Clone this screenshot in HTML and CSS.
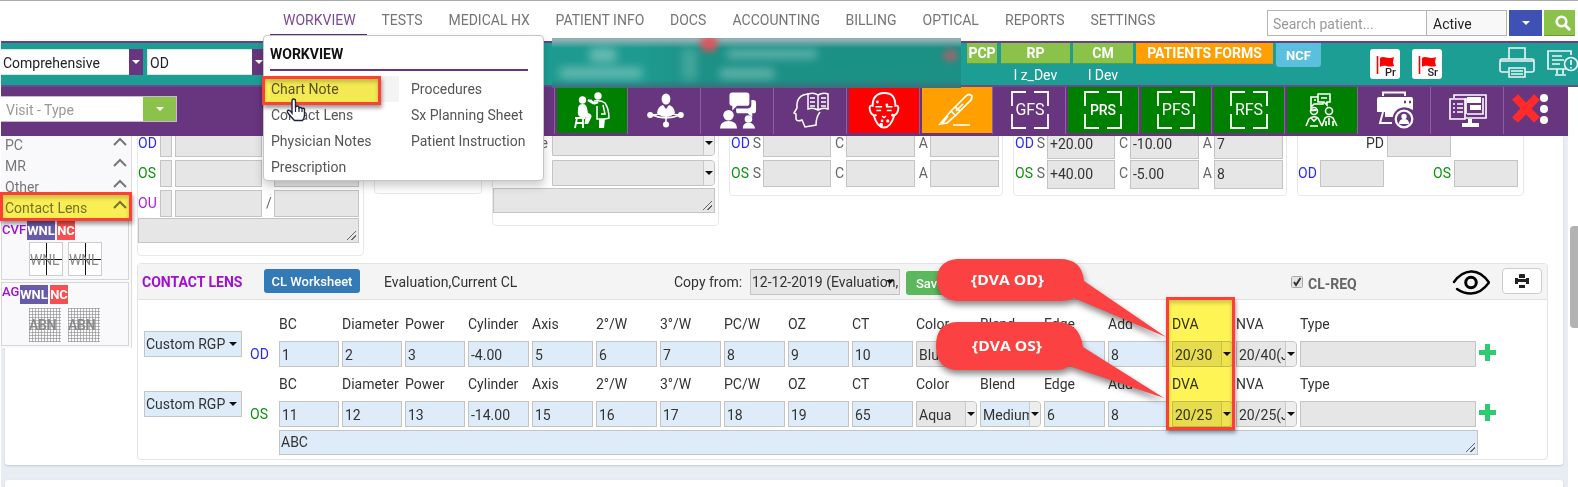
FILE: index.html
```html
<!DOCTYPE html>
<html lang="en">
<head>
<meta charset="utf-8">
<title>Chart Note</title>
<link rel="stylesheet" href="styles.css">
</head>
<body>
<nav class="topnav">
  <div class="menu">
    <a class="active">WORKVIEW</a><a>TESTS</a><a>MEDICAL HX</a><a>PATIENT INFO</a><a>DOCS</a><a>ACCOUNTING</a><a>BILLING</a><a>OPTICAL</a><a>REPORTS</a><a>SETTINGS</a>
  </div>
  <div class="search">
    <div class="search-box">Search patient...</div>
    <div class="search-status">Active</div>
    <div class="search-drop"><i class="caret white"></i></div>
    <div class="search-go"><svg width="16" height="16" viewBox="0 0 16 16"><circle cx="6.5" cy="6.5" r="4.8" fill="none" stroke="#fff" stroke-width="2.6"/><path d="M10 10l4.2 4.2" stroke="#fff" stroke-width="3" stroke-linecap="round"/></svg></div>
  </div>
</nav>

<header class="patient">
  <div class="combo exam"><span>Comprehensive</span><b><i class="caret white"></i></b></div>
  <div class="combo eye"><span>OD</span><b><i class="caret white"></i></b></div>
  <div class="tags">
    <div class="tag pcp"><b>PCP</b></div>
    <div class="tag rp"><b>RP</b><span>l z_Dev</span></div>
    <div class="tag cm"><b>CM</b><span>l Dev</span></div>
    <div class="tag forms"><b>PATIENTS FORMS</b></div>
    <div class="ncf">NCF</div>
  </div>
  <div class="flags">
    <div class="flag"><svg width="20" height="18" viewBox="0 0 20 18"><path d="M1.5 0v18" stroke="#f00" stroke-width="1.6"/><path d="M4 2c4-3 7 2 14-1l-1 5 1 4c-6 2-9-2-14 1z" fill="#f00"/></svg><span>Pr</span></div>
    <div class="flag"><svg width="20" height="18" viewBox="0 0 20 18"><path d="M1.5 0v18" stroke="#f00" stroke-width="1.6"/><path d="M4 2c4-3 7 2 14-1l-1 5 1 4c-6 2-9-2-14 1z" fill="#f00"/></svg><span>Sr</span></div>
  </div>
  <svg class="print-top" width="36" height="32" viewBox="0 0 36 32" fill="none" stroke="#e9f7f5" stroke-width="1.6"><path d="M10 12V1h16v11M9 25H3q-2 0-2-2V14q0-2 2-2h30q2 0 2 2v9q0 2-2 2h-7M1 14h34"/><path d="M10 21h16v9H10zM12 24h12M12 27h12"/></svg>
  <svg class="alert-top" width="31" height="27" viewBox="0 0 31 27" fill="none" stroke="#e9f7f5" stroke-width="1.7"><path d="M24 5V1H1v18h18M5 6h10M5 10h12M5 14h8M10 19v5M16 19v5M8 25h11"/><circle cx="24" cy="14" r="6.5"/><path d="M24 10v5M24 17v1.5"/></svg>
</header>

<div class="toolbar">
  <div class="visit"><span>Visit - Type</span><b><i class="caret white"></i></b></div>
  <div class="tools">
    <div class="tool green"><svg width="36" height="38" viewBox="0 0 36 38" fill="#fff"><circle cx="8.500" cy="9" r="3.700"/><path d="M4 18q0-5 5-5 3 0 4 4l1 5q4 1 3.500 4L14 33h-3.500l1-7H7q-4 0-3-8z"/><path d="M1 27h10M3 27l-2 10M9 27v10M2 32h7" stroke="#fff" stroke-width="1.800" fill="none"/><circle cx="24" cy="5" r="3.700"/><path d="M24 11q-5 3-8-2M14 9l5 3" stroke="#fff" stroke-width="2.600" fill="none"/><path d="M20 10q7-1 11 2 4 6 4 15-3 1-5 1H23V15M29 14l2 9h-4" stroke="#fff" stroke-width="1.500" fill="none"/><path d="M25 28h6l-1 9h-5z"/></svg></div>
    <div class="tool"><svg width="37" height="35" viewBox="0 0 37 35"><path d="M4 22q15-1 15-4 0 3 15 4M5 22q14 6 28 0M19 24v8" stroke="#fff" stroke-width="1.600" fill="none"/><g fill="#fff"><ellipse cx="19" cy="6" rx="4.400" ry="5.500"/><path d="M10 20q1-7 6-8l3 4 3-4q5 1 6 8-4 4-9 4T10 20z"/><circle cx="3.200" cy="22" r="3"/><circle cx="33.800" cy="22" r="3"/><circle cx="19" cy="31.500" r="3"/></g></svg></div>
    <div class="tool"><svg width="38" height="39" viewBox="0 0 40 40" fill="#fff"><path d="M14 1h15q3 0 3 3v8q0 3-3 3H19l-5 5v-5q-3 0-3-3V4q0-3 3-3z"/><path d="M34 9h2q3 0 3 3v8q0 3-3 3h-1v4l-5-4H20q-2 0-2-3v-2h12q4 0 4-4z"/><circle cx="10" cy="25" r="5.500"/><path d="M1 39q0-8 9-8t9 8z"/><circle cx="31" cy="29" r="4"/><path d="M25 39q0-6 6-6t7 6z"/></svg></div>
    <div class="tool"><svg width="38" height="38" viewBox="0 0 38 38" fill="none" stroke="#fff" stroke-width="1.500"><path d="M16 3Q4 4 5 17l-3 5 2 1v5q1 3 6 1l3 7 11-2q0-8 4-13"/><path d="M16 3q6-2 10 1 5-3 10-1v15q-5-2-10 1-5-3-10-1zM26 4v15M18 7h5M18 11h5M18 15h5M29 7h5M29 11h5M29 15h5"/></svg></div>
    <div class="tool red"><svg width="36" height="39" viewBox="0 0 38 40" fill="none" stroke="#fff" stroke-width="2"><path d="M7 15Q7 2 19 1.500T31 15q4-1 3 4t-4 6q-4 13-11 13T8 25q-3-1-4-6t3-4z"/><path d="M10 16h7M21 16h7M11 20h5M22 20h5M17 26l2 1.500 2-1.500" stroke-width="1.500"/><g fill="#fff" stroke="none"><circle cx="12" cy="11" r="1.500"/><circle cx="22" cy="14" r="1.500"/><circle cx="10" cy="25" r="1.300"/><circle cx="28" cy="25" r="1.500"/><circle cx="23" cy="31" r="1.700"/><circle cx="16" cy="35" r="2"/><circle cx="17" cy="31" r="1.400"/></g></svg></div>
    <div class="tool orange"><svg width="40" height="34" viewBox="0 0 40 34" fill="none" stroke="#fff" stroke-width="1.700"><path d="M3 31L14 18 29 3q3-3 6 0 0 4-3 6L18 23l-8 7z"/><path d="M14 18l5 5M18 14l5 4M19 18l7-7M5 31l6-8M16 32h17"/></svg></div>
    <div class="tool scan gfs"><svg width="38" height="38" viewBox="0 0 38 38"><path d="M15 1H1v14M23 1h14v14M1 23v14h14M37 23v14H23"/></svg><span>GFS</span></div>
    <div class="tool scan green prs"><svg width="38" height="38" viewBox="0 0 38 38"><path d="M15 1H1v14M23 1h14v14M1 23v14h14M37 23v14H23"/></svg><span>PRS</span></div>
    <div class="tool scan green"><svg width="38" height="38" viewBox="0 0 38 38"><path d="M15 1H1v14M23 1h14v14M1 23v14h14M37 23v14H23"/></svg><span>PFS</span></div>
    <div class="tool scan green"><svg width="38" height="38" viewBox="0 0 38 38"><path d="M15 1H1v14M23 1h14v14M1 23v14h14M37 23v14H23"/></svg><span>RFS</span></div>
    <div class="tool green"><svg width="34" height="34" viewBox="0 0 34 34" fill="none" stroke="#fff" stroke-width="1.600"><path d="M13 1h12v8h-3v3l-3-3h-6zM13 4H6v10l3-3h9V9M16 5h6M9 7h2"/><circle cx="9" cy="18" r="3.500"/><circle cx="24" cy="18" r="3.500"/><path d="M1 33l3-7q4-4 9-1l4 8M5 33h8M6 25l3 3 3-3M17 33l3-8q4-3 8 0l4 8M21 33v-5M28 33v-5M24 25v7"/><path d="M6 17q4 1 6-1" stroke-width="2"/></svg></div>
    <div class="tool"><svg width="38" height="38" viewBox="0 0 38 38"><path d="M7 5V1.500h22V5" fill="none" stroke="#fff" stroke-width="2"/><path d="M3 6h32q2 0 2 2v11q-8-5-15-1-5 4-5 8H9V21H1V8q0-2 2-2z" fill="#fff"/><path d="M7 21L4 32h12" fill="none" stroke="#fff" stroke-width="2"/><circle cx="28" cy="28" r="8.300" fill="#68367e" stroke="#fff" stroke-width="2.200"/><circle cx="28" cy="25.500" r="2.700" fill="#fff"/><path d="M23 33q0-5 5-5t5 5z" fill="#fff"/><path d="M28 11h2M33 11h2" stroke="#68367e" stroke-width="2.500"/></svg></div>
    <div class="tool"><svg width="38" height="34" viewBox="0 0 38 34" fill="none" stroke="#fff" stroke-width="1.600"><path d="M5 5V2h32v23H17M17 5v16M34 5v16H18"/><path d="M1 6h15v20H1zM4 11h2M8 11h6M4 15h2M8 15h6M4 19h2M8 19h6"/><path d="M18 4h14v6H18zM21 12h11v5H21z" fill="#fff" stroke="none"/><path d="M21 26v5M13 32h17" stroke-width="4"/></svg></div>
    <div class="tool close"><svg width="38" height="32" viewBox="0 0 38 32"><path d="M4 4l22 23M26 4L4 27" stroke="#ff2b2b" stroke-width="8"/><g fill="#fff"><circle cx="33" cy="5" r="4"/><circle cx="33" cy="16" r="4"/><circle cx="33" cy="27" r="4"/></g></svg></div>
  </div>
</div>

<main class="workspace">
  <section class="card">
    <div class="panels">
      <div class="panel pa">
        <div class="row"><em class="od">OD</em><u></u><u></u><s></s><u></u></div>
        <div class="row"><em class="os">OS</em><u></u><u></u><s></s><u></u></div>
        <div class="row"><em class="ou">OU</em><u></u><u></u><s>/</s><u></u></div>
        <div class="area"><i class="grip"></i></div>
      </div>
      <div class="panel pb"></div>
      <div class="panel pc">
        <div class="row"><em>e</em><div class="sel"><span></span><b><i class="caret"></i></b></div></div>
        <div class="row"><em></em><div class="sel"><span></span><b><i class="caret"></i></b></div></div>
        <div class="area"><i class="grip"></i></div>
      </div>
      <div class="panel sca pd">
        <div class="row"><em class="od">OD</em><s>S</s><u></u><s>C</s><u></u><s>A</s><u></u></div>
        <div class="row"><em class="os">OS</em><s>S</s><u></u><s>C</s><u></u><s>A</s><u></u></div>
      </div>
      <div class="panel sca pe">
        <div class="row"><em class="od">OD</em><s>S</s><u>+20.00</u><s>C</s><u>-10.00</u><s>A</s><u>7</u></div>
        <div class="row"><em class="os">OS</em><s>S</s><u>+40.00</u><s>C</s><u>-5.00</u><s>A</s><u>8</u></div>
      </div>
      <div class="panel pf">
        <div class="row pdist"><em>PD</em><u></u></div>
        <div class="row"><em class="od">OD</em><u></u><em class="os">OS</em><u></u></div>
      </div>
    </div>

    <div class="lens">
      <div class="lens-head">
        <h2>CONTACT LENS</h2>
        <div class="btn-blue">CL Worksheet</div>
        <span class="eval">Evaluation,Current CL</span>
        <span class="copy">Copy from:</span>
        <div class="copy-sel">12-12-2019 (Evaluation,<i class="caret"></i></div>
        <div class="btn-green">Save</div>
        <div class="req"><svg width="12" height="12" viewBox="0 0 12 12"><rect x=".5" y=".5" width="11" height="11" rx="1" fill="#e4e4e4" stroke="#aaa"/><path d="M3 6l2 3 4.500-7" fill="none" stroke="#333" stroke-width="2"/></svg><b>CL-REQ</b></div>
        <svg class="eye-icon" width="38" height="25" viewBox="0 0 38 25" fill="none" stroke="#000" stroke-width="2.400" stroke-linecap="round"><path d="M2 12Q9 2 19 1.500T37 12.500Q29 23.500 19 23.500 11 23.500 5 19"/><circle cx="19" cy="12.500" r="5.300" stroke-width="3"/></svg>
        <div class="print-btn"><svg width="14" height="14" viewBox="0 0 14 14" fill="#222"><path d="M4 4V1q0-1 1-1h4q1 0 1 1v3zM0 4h3v1h8V4h3v6h-3V8H3v2H0zM4 11h6v3H4z"/></svg></div>
      </div>
      <div class="lens-body">
        <div class="lens-row">
          <div class="type-sel">Custom RGP<i class="caret"></i></div><em class="od">OD</em>
          <div class="grid">
            <label>BC</label><label>Diameter</label><label>Power</label><label>Cylinder</label><label>Axis</label><label>2°/W</label><label>3°/W</label><label>PC/W</label><label>OZ</label><label>CT</label><label>Color</label><label>Blend</label><label>Edge</label><label>Add</label><label>DVA</label><label>NVA</label><label>Type</label>
            <u>1</u><u>2</u><u>3</u><u>-4.00</u><u>5</u><u>6</u><u>7</u><u>8</u><u>9</u><u>10</u><div class="sel"><span>Blue</span><b><i class="caret"></i></b></div><div class="sel blue"><span></span><b><i class="caret"></i></b></div><u></u><u>8</u><div class="sel"><span>20/30</span><b><i class="caret"></i></b></div><div class="sel"><span>20/40(J</span><b><i class="caret"></i></b></div><u class="grey"></u>
          </div>
          <i class="plus"></i>
        </div>
        <div class="lens-row">
          <div class="type-sel">Custom RGP<i class="caret"></i></div><em class="os">OS</em>
          <div class="grid">
            <label>BC</label><label>Diameter</label><label>Power</label><label>Cylinder</label><label>Axis</label><label>2°/W</label><label>3°/W</label><label>PC/W</label><label>OZ</label><label>CT</label><label>Color</label><label>Blend</label><label>Edge</label><label>Add</label><label>DVA</label><label>NVA</label><label>Type</label>
            <u>11</u><u>12</u><u>13</u><u>-14.00</u><u>15</u><u>16</u><u>17</u><u>18</u><u>19</u><u>65</u><div class="sel"><span>Aqua</span><b><i class="caret"></i></b></div><div class="sel blue"><span>Medium</span><b><i class="caret"></i></b></div><u>6</u><u>8</u><div class="sel"><span>20/25</span><b><i class="caret"></i></b></div><div class="sel"><span>20/25(J</span><b><i class="caret"></i></b></div><u class="grey"></u>
          </div>
          <i class="plus"></i>
        </div>
        <div class="area comment">ABC<i class="grip"></i></div>
      </div>
    </div>
  </section>
  <section class="card next"></section>
</main>
<div class="scroll"><i></i></div>

<aside class="sidebar">
  <div class="side-row">PC<svg width="14" height="9" viewBox="0 0 14 9"><path d="M1 8l6-6 6 6"/></svg></div>
  <div class="side-row">MR<svg width="14" height="9" viewBox="0 0 14 9"><path d="M1 8l6-6 6 6"/></svg></div>
  <div class="side-row">Other<svg width="14" height="9" viewBox="0 0 14 9"><path d="M1 8l6-6 6 6"/></svg></div>
  <div class="side-row">Contact Lens<svg width="14" height="9" viewBox="0 0 14 9"><path d="M1 8l6-6 6 6"/></svg></div>
  <div class="side-box cvf"><div class="side-title"><b>CVF</b><i class="wnl">WNL</i><i class="nc">NC</i></div>
    <div class="thumbs"><div class="cross">WNL</div><div class="cross">WNL</div></div></div>
  <div class="side-box ag"><div class="side-title"><b>AG</b><i class="wnl">WNL</i><i class="nc">NC</i></div>
    <div class="thumbs"><div class="mesh">ABN</div><div class="mesh">ABN</div></div></div>
</aside>

<div class="blurred"><i class="b1"></i><i class="b2"></i><i class="b3"></i><i class="b4"></i><i class="b5"></i><i class="r1"></i><i class="r2"></i></div>

<div class="dropdown">
  <h3>WORKVIEW</h3>
  <div class="drop-grid">
    <a class="hover">Chart Note</a><a>Procedures</a>
    <a>Contact Lens</a><a>Sx Planning Sheet</a>
    <a>Physician Notes</a><a>Patient Instruction</a>
    <a>Prescription</a>
  </div>
</div>

<div class="mark mark-note"></div>
<div class="mark mark-side"></div>
<div class="mark mark-dva"></div>
<svg class="cursor" width="20" height="25" viewBox="0 0 20 25"><path d="M6 14V3q0-2 1.700-2T9.500 3v7q0-2 1.700-2t1.800 2v1q0-1.500 1.500-1.500T16 11.500q0-1.200 1.300-1.200T18.500 12v5q0 3-2 5.500H8.500Q5 19 1.500 14.500q-.5-2 1-2.200T6 15z" fill="#fff" stroke="#1c2340" stroke-width="1.400"/><path d="M9.500 10v4M13 10.500V14M16 11.500V14" stroke="#1c2340" stroke-width="1.200"/></svg>

<svg class="callouts" width="240" height="160" viewBox="0 0 240 160">
  <path d="M22 4H125Q147 4 149 26L231 82 139 43Q134 46 125 46H22Q2 44 2 25T22 4z"/>
  <path d="M22 67H123Q145 68 148 92L229 143 134 111Q130 115 121 115H22Q1 114 1 91T22 67z"/>
  <text x="36" y="30" textLength="73" lengthAdjust="spacingAndGlyphs">{DVA OD}</text>
  <text x="37" y="96" textLength="70" lengthAdjust="spacingAndGlyphs">{DVA OS}</text>
</svg>
</body>
</html>
```
FILE: styles.css
```css
* { box-sizing: border-box; }
body { margin: 0; width: 1578px; height: 487px; overflow: hidden; position: relative; background: #fff; font: 14px/16px Roboto, "Liberation Sans", sans-serif; color: #333; }
u, s, em, i { text-decoration: none; font-style: normal; }
h2, h3 { margin: 0; font-size: 14px; }

.caret { display: inline-block; border: 4px solid transparent; border-top-color: #111; border-bottom: 0; flex: none; }
.caret.white { border-top-color: #fff; }

/* top navigation */
.topnav { height: 41px; border-top: 1px solid #aaa; display: flex; }
.menu { padding-left: 269px; width: 1267px; display: grid; grid-template-columns: 98px 67px 107px 114.500px 62.500px 113px 77px 82.500px 85.500px auto; align-items: start; color: #757575; }
.menu a { padding: 11px 0 0 14.500px; height: 35px; white-space: nowrap; }
.menu a.active { color: #7b4a94; border-bottom: 2px solid #5c2d7c; padding-left: 13px; margin-left: 1px; }
.search { display: flex; padding-top: 9px; height: 35px; }
.search-box { width: 160px; border: 1px solid #b5b5b5; padding: 5px; color: #999; }
.search-status { width: 80px; border: 1px solid #b5b5b5; border-left: 0; padding: 5px 6px; color: #222; background: #f8f8f8; }
.search-drop { width: 33px; margin-left: 2px; background: #3f51b5; display: grid; place-items: center; }
.search-go { width: 31px; margin-left: 2px; background: #8bc34a; border-bottom: 1px solid #6a9a33; display: grid; place-items: center; padding-left: 6px; }

/* patient strip */
.patient { margin-left: 1px; height: 46px; background: #1d9e95; border-top: 2px solid #68408a; border-bottom: 2px solid #6a4a8c; display: flex; align-items: flex-start; }
.combo { display: flex; height: 26px; margin-top: 6px; background: #fff; color: #222; border: 1px solid #d8e6e6; border-right: 0; }
.combo span { flex: 1; padding: 5px 2px; }
.combo b { width: 14px; margin: -1px 0; background: #68367e; display: grid; place-items: center; }
.exam { width: 142px; border-left: 0; }
.eye { width: 119px; margin-left: 4px; }
.tags { display: flex; margin-left: 701px; color: #fff; line-height: 21px; }
.tag { text-align: center; white-space: nowrap; }
.tag b { display: block; height: 21px; background: #8bc34a; border-bottom: 1px solid #5f9e33; }
.tag span { display: block; margin-top: 1px; line-height: 20px; }
.pcp { width: 30px; }
.rp { width: 69px; margin-left: 4px; }
.cm { width: 60px; margin-left: 3px; }
.forms { width: 137px; margin-left: 3px; }
.tag.forms b { background: #ffa000; border-color: #e59410; }
.ncf { width: 45px; height: 24px; margin-left: 3px; background: #5bc0de; border-radius: 0 0 3px 3px; text-align: center; font-weight: bold; font-size: 13px; line-height: 26px; }
.flags { display: flex; gap: 12px; margin: 6px 0 0 49px; }
.flag { width: 30px; height: 30px; background: #fff; border-radius: 3px; position: relative; padding: 7px 0 0 6px; }
.flag span { position: absolute; right: 4px; bottom: 0; font-size: 11px; line-height: 12px; color: #222; font-weight: 500; }
.print-top { margin: 4px 0 0 57px; flex: none; }
.alert-top { margin: 7px 0 0 12px; flex: none; }

/* toolbar */
.toolbar { margin-left: 1px; width: 1567px; height: 49px; background: #68367e; display: flex; align-items: flex-start; }
.visit { width: 176px; height: 26px; margin: 9px 377px 0 0; border: 1px solid #cbb6d6; border-left: 0; background: #fff; display: flex; color: #999; }
.visit span { flex: 1; padding: 5px 5px; }
.visit b { width: 33px; background: #8bc34a; display: grid; place-items: center; }
.tools { display: flex; }
.tool { width: 73px; height: 47px; border-left: 1px solid #8a61a0; border-right: 0; display: grid; place-items: center; background-clip: content-box; padding: 0 0 1px 2px; }
.tool > * { grid-area: 1 / 1; }
.green { background-color: #008000; }
.red { background-color: #f00; }
.orange { background-color: #ffa000; }
.scan svg { fill: none; stroke: #fff; stroke-width: 1.8; }
.scan span { color: #fff; font-size: 16px; }
.prs span { font-size: 14px; font-weight: 500; }
.tool.close { width: 65px; padding-right: 14px; padding-bottom: 4px; }

/* workspace */
.workspace { height: 351px; margin-left: 1px; width: 1567px; background: #e8edf4; padding: 0 5px 0 4px; overflow: hidden; }
.card { height: 329px; background: #fff; box-shadow: 0 1px 2px #c3cbcd; padding-left: 132px; overflow: hidden; border-radius: 0 0 3px 3px; }
.card.next { height: 20px; margin-top: 15px; border-radius: 3px; }
.panels { display: flex; align-items: flex-start; height: 134px; margin-top: -7px; padding-bottom: 7px; }
.panel { border: 1px solid #e8e8e8; border-radius: 0 0 4px 4px; flex: none; }
.pa { width: 227px; height: 127px; margin-right: 10px; }
.pb { width: 108px; height: 65px; margin-right: 10px; }
.pc { width: 227px; height: 97px; margin-right: 10px; }
.pd, .pe { width: 274px; height: 67px; margin-right: 10px; }
.pf { width: 227px; height: 67px; }
.row { display: grid; height: 26px; margin-bottom: 4px; }
.pa .row { grid-template-columns: 22px 12px 90px 12px 85px; }
.pa .row u:nth-of-type(2) { margin-left: 3px; }
.pa .row s { padding-left: 4px; }
.row em, .row s { line-height: 27px; color: #666; white-space: nowrap; }
.row u, .grid u { border: 1px solid #c4c4c4; background: #e6e6e6; padding: 0 2px; line-height: 27px; white-space: nowrap; color: #333; }
.pc .row { grid-template-columns: 59px 163px; }
.pc .row em { text-align: right; padding-right: 4px; }
.sca .row { grid-template-columns: 22px 11px 68px 15px 69px 15px 69px; }
.sca .row em { padding-left: 1px; }
.sca .row s { text-align: right; padding-right: 2px; }
.row em.od, .od { color: #2a2aff; }
.row em.os, .os { color: #109010; }
.row em.ou { color: #b020e0; }
.pf .row { grid-template-columns: 22px 64px 70px 65px; }
.pf .row u { width: 64px; }
.pf em.os { text-align: right; padding-right: 3px; }
.pf .row.pdist { grid-template-columns: 89px 64px; }
.pdist em { text-align: right; padding-right: 3px; color: #333; }
.area { position: relative; height: 25px; border: 1px solid #c4c4c4; background: #e6e6e6; }
.pa .area { width: 221px; margin-top: -2px; }
.pc .area { width: 222px; margin-top: -2px; }
.grip { position: absolute; right: 2px; bottom: 2px; width: 9px; height: 9px; background: linear-gradient(135deg, transparent 46%, #666 46%, #666 54%, transparent 54%, transparent 70%, #666 70%, #666 78%, transparent 78%); }
.sel { display: flex; border: 1px solid #c4c4c4; background: #e6e6e6; border-radius: 0 4px 4px 0; height: 26px; overflow: hidden; color: #333; }
.sel span { flex: 1; min-width: 0; overflow: hidden; padding-left: 2px; line-height: 27px; white-space: nowrap; }
.sel b { width: 11px; background: #eee; border-left: 1px solid #c9c9c9; display: grid; place-items: center; flex: none; }

/* contact lens */
.lens { width: 1411px; height: 197px; border: 1px solid #e3e3e3; border-radius: 4px; }
.lens-head { height: 36px; background: #f4f4f4; border-bottom: 1px solid #e0e0e0; display: flex; align-items: flex-start; }
.lens-head > * { flex: none; }
.lens-head h2 { width: 126px; padding: 10px 0 0 4px; color: #a010d0; }
.btn-blue { width: 96px; height: 24px; margin-top: 5px; border-radius: 3px; background: #337ab7; color: #fff; font-weight: 500; font-size: 13px; line-height: 25px; text-align: center; }
.eval { width: 314px; padding: 10px 0 0 24px; }
.copy { width: 76px; padding-top: 10px; white-space: nowrap; }
.copy-sel { width: 150px; height: 26px; margin-top: 5px; margin-right: 6px; border: 1px solid #c4c4c4; background: #e6e6e6; line-height: 25px; padding-left: 1px; position: relative; white-space: nowrap; }
.copy-sel .caret { position: absolute; right: 5px; top: 10px; }
.btn-green { width: 50px; height: 24px; margin-top: 7px; border-radius: 3px; background: #5cb85c; color: #fff; font-weight: 500; font-size: 13px; line-height: 25px; padding-left: 10px; }
.req { display: flex; gap: 5px; width: 161px; padding-top: 12px; margin-left: 335px; color: #666; }
.eye-icon { margin-top: 6px; margin-right: 12px; }
.print-btn { width: 40px; height: 26px; margin-top: 4px; border: 1px solid #ccc; border-radius: 4px; background: #fff; display: grid; place-items: center; }
.lens-body { padding-left: 6px; padding-top: 12px; }
.lens-row { display: flex; height: 60px; }
.type-sel { width: 98px; height: 26px; margin-top: 19px; border: 1px solid #c4c4c4; background: #deecf9; line-height: 25px; padding-left: 1px; display: flex; align-items: center; gap: 4px; white-space: nowrap; }
.lens-row > em { width: 37px; padding: 34px 0 0 8px; }
.grid { display: grid; grid-template-columns: 60px 60px 60px repeat(13, 61px) 176px; column-gap: 3px; grid-template-rows: 29px 26px; }
.grid label { padding-top: 4px; white-space: nowrap; line-height: 17px; }
.grid u, .sel.blue, .comment { background: #deecf9; }
.grid u.grey { background: #e6e6e6; }
.plus { width: 17px; height: 17px; margin: 32px 0 0 3px; background: linear-gradient(#2ecc71, #2ecc71) 50% / 5px 17px no-repeat, linear-gradient(#2ecc71, #2ecc71) 50% / 17px 5px no-repeat; }
.comment { width: 1199px; margin: -2px 0 0 135px; padding: 3px 1px; }

/* scrollbar */
.scroll { position: absolute; left: 1568px; top: 87px; width: 10px; height: 400px; padding: 139px 0 0 2px; }
.scroll i { display: block; height: 102px; background: #b3b3b3; border-radius: 4px 0 0 4px; }

/* sidebar floats over the left of the chart card */
.sidebar { position: absolute; left: 1px; top: 136px; width: 131px; height: 212px; background: #f9f9fc; border-right: 1px solid #ddd; overflow: hidden; }
.side-row { height: 21px; padding: 0 4px; display: flex; justify-content: space-between; line-height: 19px; color: #777; }
.side-row svg { fill: none; stroke: #777; stroke-width: 2; margin-top: 1px; }
.side-box { width: 128px; border: 1px solid #d6d6d6; }
.cvf { height: 60px; }
.ag { height: 64px; margin-top: 2px; }
.side-title { display: flex; font-weight: bold; line-height: 18px; height: 21px; font-size: 13px; }
.side-title b { color: #a010d0; font-weight: 500; flex: none; }
.cvf .side-title b { width: 25px; }
.ag .side-title b { width: 18px; }
.side-title i { color: #fff; height: 19px; line-height: 20px; text-align: center; font-weight: bold; flex: none; }
.ag .side-title i { margin-top: 2px; }
.wnl { width: 28px; background: #675aa9; margin-right: 2px; }
.nc { width: 18px; background: #f85050; }
.thumbs { display: flex; gap: 5px; padding-left: 27px; color: #888; }
.cross, .mesh { width: 34px; height: 34px; line-height: 35px; letter-spacing: -.2px; }
.cross { border: 1px solid #ccc; background: linear-gradient(#111, #111) 50% / 1px 100% no-repeat, linear-gradient(#111, #111) 50% / 100% 1px no-repeat, #fff; }
.thumbs .mesh { width: 32px; margin-right: 2px; background: repeating-linear-gradient(90deg, #8889 0 1px, transparent 1px 3px), repeating-linear-gradient(#8889 0 1px, transparent 1px 3px); font-weight: 500; }
.ag .thumbs { padding-top: 4px; }

/* redacted patient details */
.blurred { position: absolute; left: 552px; top: 38px; width: 409px; height: 50px; overflow: hidden; background: linear-gradient(#8fb0b5 0 2px, #1d938880 10px 42px, #3c6e7c), linear-gradient(90deg, #1fa297 90px, #1a8d82 150px); }
.blurred i { position: absolute; background: #9fd3cf; filter: blur(5px); opacity: .6; }
.b1 { left: 38px; top: 10px; width: 26px; height: 14px; }
.b2 { left: 8px; top: 30px; width: 82px; height: 10px; }
.b3 { left: 130px; top: 10px; width: 15px; height: 32px; }
.blurred .b3 { opacity: .3; }
.b4 { left: 175px; top: 12px; width: 90px; height: 8px; }
.b5 { left: 168px; top: 31px; width: 54px; height: 9px; }
.blurred .r1, .blurred .r2 { background: #e65058; filter: blur(3px); opacity: .9; border-radius: 50%; }
.r1 { left: 148px; top: -3px; width: 18px; height: 17px; }
.r2 { left: 391px; top: 11px; width: 15px; height: 13px; }
.blurred .r2 { opacity: .6; }

/* workview menu */
.dropdown { position: absolute; left: 263px; top: 35px; width: 281px; height: 146px; border: 1px solid #c5c5c5; border-radius: 4px; background: #fff; box-shadow: 0 5px 10px #0003; padding: 10px 14px 0 6px; }
.dropdown h3 { width: 258px; height: 25px; color: #111; border-bottom: 2px solid #68367e; }
.drop-grid { display: grid; grid-template-columns: 129px 130px; column-gap: 11px; grid-auto-rows: 26px; margin-top: 5px; color: #555; }
.drop-grid a { line-height: 26px; padding-left: 1px; white-space: nowrap; }
.hover { background: #f4f4f4; }

/* highlight frames */
.mark { position: absolute; border: 3px solid #fd4036; box-shadow: 1px 3px 4px #0006; }
.mark::before { content: ""; position: absolute; inset: 0; background: #fff455; box-shadow: inset 0 3px 4px #0003; mix-blend-mode: multiply; }
.mark-note { left: 262px; top: 76px; width: 119px; height: 29px; }
.mark-side { left: 0; top: 192px; width: 132px; height: 29px; }
.mark-dva { left: 1166px; top: 297px; width: 69px; height: 133px; }
.cursor { position: absolute; left: 286px; top: 98px; }

.callouts { position: absolute; left: 935px; top: 255px; filter: drop-shadow(1px 4px 3px #0007); }
.callouts path { fill: #fb4141; }
.callouts text { fill: #fff; font: bold 15px "Open Sans", "Noto Sans", sans-serif; }
```
